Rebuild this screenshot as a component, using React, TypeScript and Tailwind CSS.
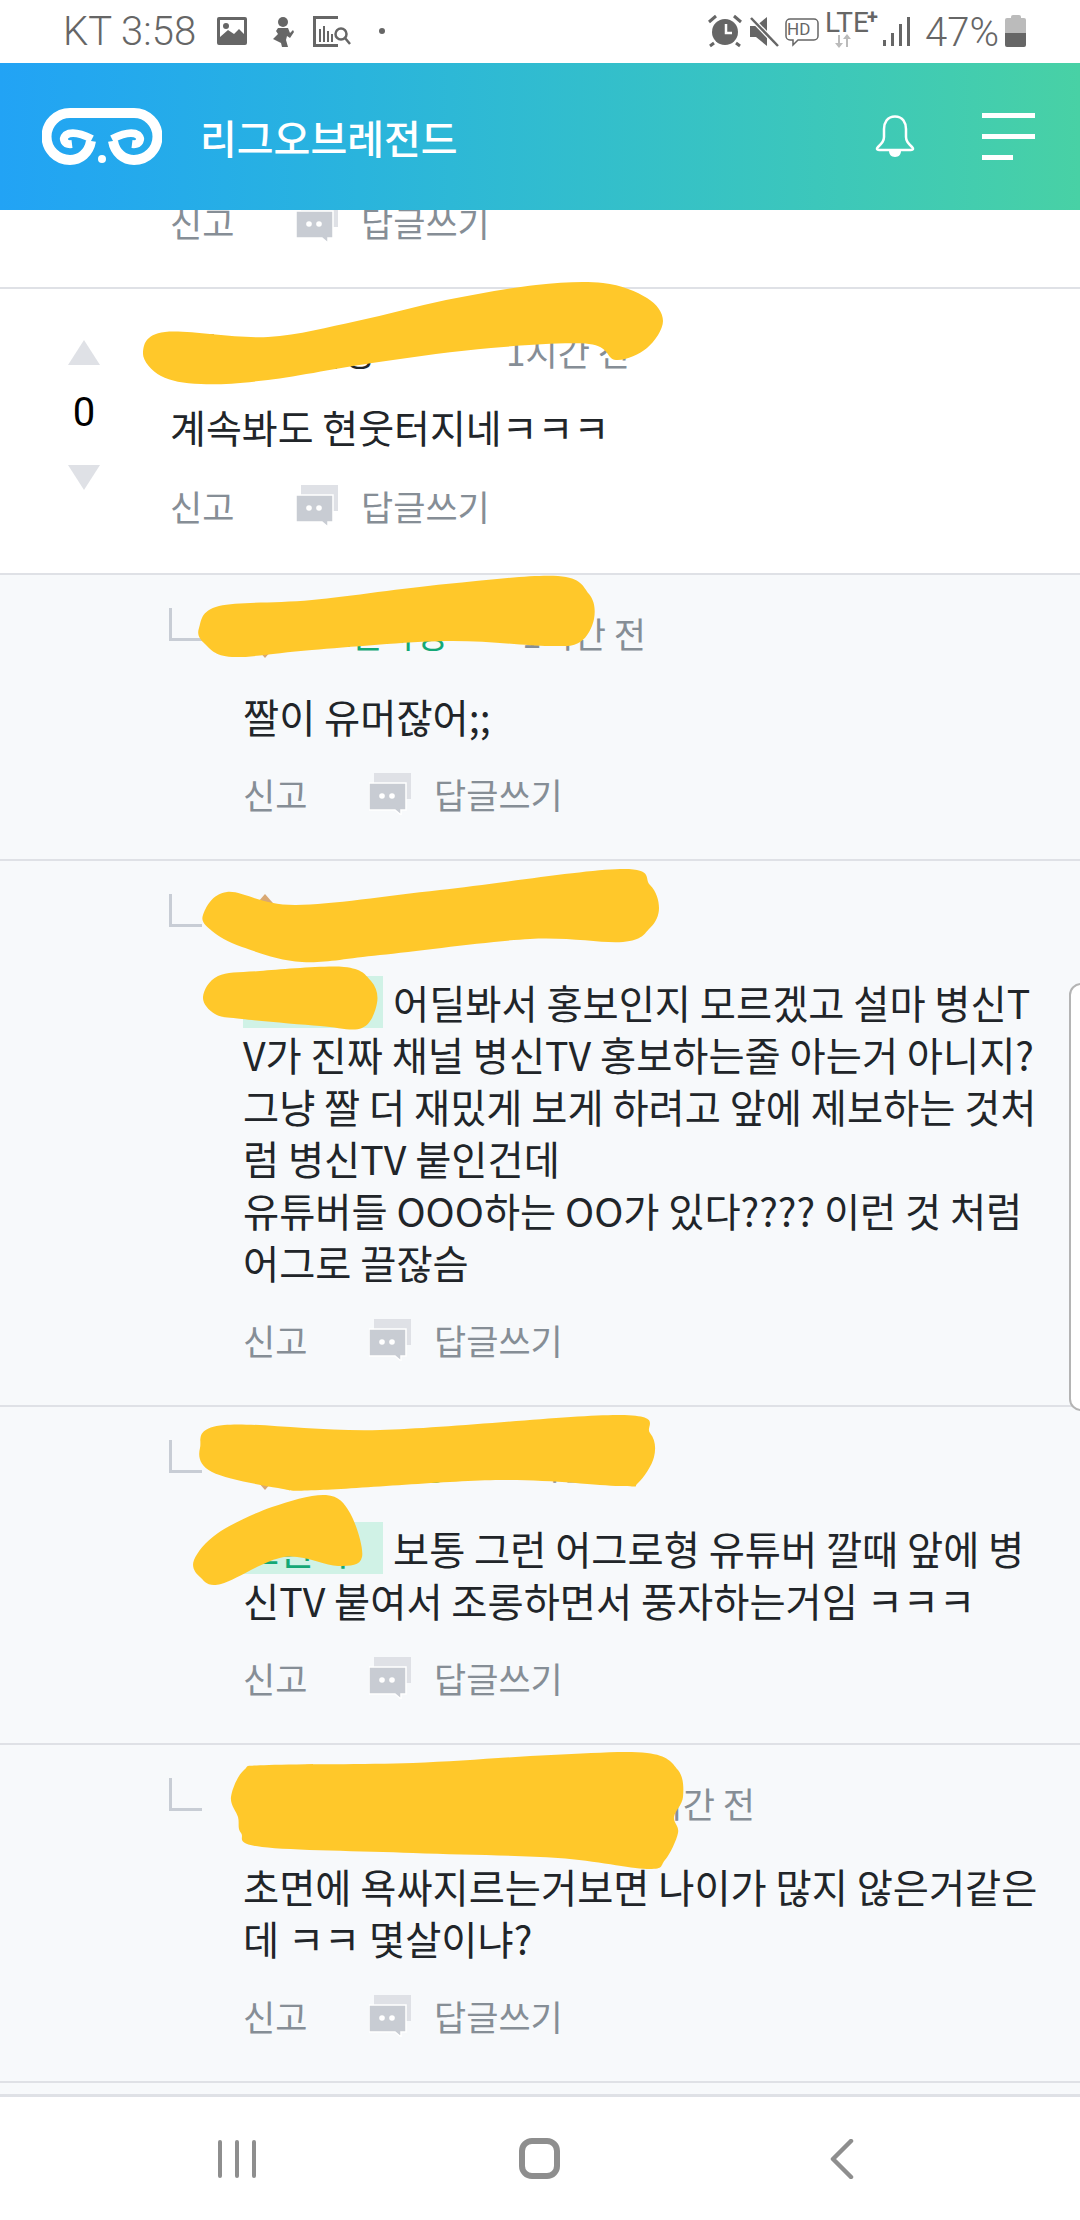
import type { ReactNode } from 'react';

const KR = 'font-["Noto_Sans_CJK_KR","Noto_Sans",sans-serif]';

type P = [number, number];

// smooth closed outline through the points of a marker stroke
function blob(pts: P[]) {
    const n = pts.length;
    let d = `M${pts[0][0]} ${pts[0][1]}`;
    for (let i = 0; i < n; i++) {
        const p0 = pts[(i - 1 + n) % n], p1 = pts[i], p2 = pts[(i + 1) % n], p3 = pts[(i + 2) % n];
        d += ` C${p1[0] + (p2[0] - p0[0]) / 6} ${p1[1] + (p2[1] - p0[1]) / 6} ${p2[0] - (p3[0] - p1[0]) / 6} ${p2[1] - (p3[1] - p1[1]) / 6} ${p2[0]} ${p2[1]}`;
    }
    return d + 'Z';
}

const scribbles: P[][] = [
    [[143, 353], [165, 332], [268, 337], [357, 321], [446, 300], [536, 285], [603, 283], [647, 298], [663, 321], [647, 348], [616, 360], [589, 344], [491, 348], [379, 362], [268, 380], [201, 384], [161, 376]],
    [[199, 628], [219, 606], [312, 600], [446, 584], [558, 576], [589, 594], [594, 619], [580, 642], [549, 646], [446, 641], [312, 650], [232, 657], [205, 644]],
    [[203, 915], [227, 892], [296, 905], [440, 890], [620, 869], [650, 885], [659, 908], [650, 928], [623, 942], [530, 939], [380, 955], [302, 962], [242, 947], [212, 931]],
    [[203, 997], [218, 976], [260, 971], [344, 967], [371, 981], [377, 1003], [362, 1028], [320, 1026], [242, 1019], [215, 1014]],
    [[200, 1448], [224, 1425], [380, 1430], [620, 1415], [650, 1433], [654, 1457], [638, 1483], [620, 1486], [500, 1480], [320, 1490], [278, 1488], [212, 1472]],
    [[194, 1560], [218, 1533], [272, 1507], [326, 1495], [350, 1513], [362, 1557], [338, 1566], [284, 1557], [221, 1584], [200, 1577]],
    [[231, 1797], [244, 1770], [269, 1765], [413, 1763], [551, 1755], [647, 1753], [678, 1770], [683, 1797], [674, 1817], [678, 1833], [665, 1860], [647, 1869], [558, 1858], [413, 1853], [262, 1847], [241, 1833], [238, 1817]],
];

function ReplyIcon() {
    return (
        <svg width="42" height="42" viewBox="0 0 42 42" className="shrink-0">
            <rect x="5" y="0" width="37" height="26" fill="#dfe1e6" />
            <path d="M0 10h37v27h-5v5l-6-5H0z" fill="#c8ccd3" stroke="#fff" strokeWidth="1.500" />
            <circle cx="13" cy="23" r="2.800" fill="#fff" />
            <circle cx="23" cy="23" r="2.800" fill="#fff" />
        </svg>
    );
}

function Actions() {
    return (
        <div className="flex h-[44px] items-center text-[35px] text-[#868e96]">
            <span className="w-[126px]">신고</span>
            <ReplyIcon />
            <span className="ml-[23px]">답글쓰기</span>
        </div>
    );
}

function Header({ name, time, nameWidth, main }: { name: string; time: string; nameWidth: string; main?: boolean }) {
    return (
        <div className="flex h-[50px] items-center text-[35px]">
            <svg width="44" height="50" viewBox="0 0 44 50" className="mr-[32px] shrink-0">
                <path d={main ? 'M0 8h44v22L22 50 0 30z' : 'M22 0 44 25 22 50 0 25z'} fill="#d9a873" />
            </svg>
            <span className={`${nameWidth} truncate ${main ? 'text-[#212529]' : 'text-[#14a876]'}`}>{name}</span>
            <span className="text-[#868e96]">{time}</span>
        </div>
    );
}

function Mention({ children }: { children: ReactNode }) {
    return <span className="mr-[10px] inline-block h-[52px] w-[140px] bg-[#d0f2e6] align-top text-[#14a876]">{children}</span>;
}

function Reply({ name, time, nameWidth, children }: { name: string; time: string; nameWidth: string; children: ReactNode }) {
    return (
        <div className="relative border-t-2 border-[#dfe1e6] bg-[#f7f9fb] pt-[33px] pr-[36px] pb-[43px] pl-[243px]">
            <div className="absolute top-[33px] left-[169px] h-[33px] w-[33px] border-b-[3px] border-l-[3px] border-[#c8cdd5]" />
            <Header name={name} time={time} nameWidth={nameWidth} />
            <div className="mt-[32px] text-[39.3px] leading-[52px] break-all text-[#212529]">{children}</div>
            <div className="mt-[30px]"><Actions /></div>
        </div>
    );
}

function StatusBar() {
    return (
        <div className="relative h-[63px] shrink-0 bg-white font-['Roboto',sans-serif] font-light text-[#666]">
            <span className="absolute top-[9px] left-[63px] text-[40px] leading-[46px]">KT 3:58</span>
            <svg width="1080" height="63" viewBox="0 0 1080 63" className="absolute top-0 left-0" fill="#666">
                {/* picture */}
                <path fillRule="evenodd" d="M219 17h26a2 2 0 0 1 2 2v24a2 2 0 0 1-2 2h-26a2 2 0 0 1-2-2V19a2 2 0 0 1 2-2zm1 3v17l8-7 6 4 5-5 5 5V20z" />
                <circle cx="226" cy="26" r="3" />
                {/* figure */}
                <circle cx="283" cy="22" r="5" />
                <path d="M278 28h10l2 5 3-3 1 2-4 6-3-2-1 4 2 7h-6l-1-4-8-4 5-5-2-3z" />
                {/* report search */}
                <path d="M313 16h25v3h-22v25h22v3h-25z" />
                <path d="M319 29h2v13h-2zM323 26h2v16h-2zM327 31h2v11h-2zM331 34h2v8h-2z" />
                <circle cx="341" cy="34" r="5.500" fill="none" stroke="#666" strokeWidth="2.500" />
                <path d="m345 38 5 6" stroke="#666" strokeWidth="2.500" />
                <circle cx="382" cy="31" r="3" />
                {/* alarm */}
                <circle cx="725" cy="32" r="13" />
                <path d="M726 24v9h6" fill="none" stroke="#fff" strokeWidth="2.500" />
                <path d="m709 22 7-6M741 22l-7-6M714 43l-4 3M736 43l4 3" stroke="#666" strokeWidth="3" />
                {/* mute */}
                <path d="M750 26h6l11-9v29l-11-9h-6z" />
                <path d="m750 17 28 29" stroke="#fff" strokeWidth="5" />
                <path d="m751 18 27 28" stroke="#666" strokeWidth="2.500" />
                {/* HD */}
                <path d="M790 19h24a4 4 0 0 1 4 4v13a4 4 0 0 1-4 4h-16l-5 5v-5h-3a4 4 0 0 1-4-4V23a4 4 0 0 1 4-4z" fill="none" stroke="#666" strokeWidth="1.500" />
                {/* lte arrows */}
                <path d="M838 35v8h-3l4 5 4-5h-3v-8zM846 47v-8h-3l4-5 4 5h-3v8z" fill="#bbb" />
                {/* signal */}
                <path d="M883 40h3v6h-3zM891 33h3v13h-3zM899 24h3v22h-3zM907 17h3v29h-3z" />
            </svg>
            <span className="absolute top-[19px] left-[787px] text-[17px] leading-[20px] font-normal">HD</span>
            <span className="absolute top-[10px] left-[825px] text-[28px] leading-[26px] font-normal">LTE</span>
            <span className="absolute top-[8px] left-[867px] text-[20px] leading-[18px] font-bold">+</span>
            <span className="absolute top-[10px] left-[925px] text-[40px] leading-[46px]">47%</span>
            <div className="absolute top-[15px] left-[1005px] flex h-[32px] w-[21px] flex-col">
                <div className="mx-auto h-[3px] w-[10px] rounded-t-[2px] bg-[#bbb]" />
                <div className="h-[15px] rounded-t-[2px] bg-[#bbb]" />
                <div className="h-[14px] rounded-b-[2px] bg-[#666]" />
            </div>
        </div>
    );
}

function TopBar() {
    return (
        <div className="flex h-[147px] shrink-0 items-center bg-gradient-to-r from-[#22a3f5] to-[#48d1a5] pr-[45px] pl-[42px] text-white">
            <svg width="120" height="57" viewBox="0 0 120 57" fill="none" stroke="#fff" strokeWidth="10">
                <path d="M60 5H28A23 23 0 0 0 28 52C38 52 47 45 49 33" />
                <path d="M60 5H92A23 23 0 0 1 92 52C82 52 73 45 71 33" />
                <path d="M50 31C40 26 30 23 24 27C20 31 22 37 30 36" strokeWidth="8" />
                <path d="M70 31C80 26 90 23 96 27C100 31 98 37 90 36" strokeWidth="8" />
                <circle cx="60" cy="51" r="4" fill="#fff" stroke="none" />
            </svg>
            <span className={`ml-[38px] text-[40px] font-medium ${KR}`}>리그오브레전드</span>
            <svg width="40" height="43" viewBox="0 0 40 43" fill="none" stroke="#fff" strokeWidth="2.500" className="mr-[67px] ml-auto">
                <path d="M20 1.500C12 1.500 9 8 9 14v8c0 4-2 6-6 10-2 2-1 3 1 3h32c2 0 3-1 1-3-4-4-6-6-6-10v-8c0-6-3-12.500-11-12.500z" />
                <path d="M14 36h12c0 3-2 6-6 6s-6-3-6-6z" fill="#fff" stroke="none" />
            </svg>
            <div className="flex flex-col gap-[16px]">
                <div className="h-[5px] w-[53px] bg-white" />
                <div className="h-[5px] w-[53px] bg-white" />
                <div className="h-[5px] w-[31px] bg-white" />
            </div>
        </div>
    );
}

export default function App() {
    return (
        <div className={`relative flex h-[2220px] w-[1080px] flex-col overflow-hidden bg-white text-[39px] ${KR}`}>
            <StatusBar />
            <TopBar />
            <div className="min-h-0 flex-1 overflow-hidden">
                <div className="h-[77px] overflow-hidden bg-white pl-[170px]">
                    <div className="-mt-[10px]"><Actions /></div>
                </div>

                <div className="relative flex border-t-2 border-[#dfe1e6] bg-white pt-[37px] pb-[45px]">
                    <div className="flex w-[170px] shrink-0 flex-col items-center pr-[2px]">
                        <svg width="32" height="25" viewBox="0 0 32 25" className="mt-[14px]"><path d="M16 0 32 25H0z" fill="#dfe1e6" /></svg>
                        <span className="mt-[27px] font-['Roboto',sans-serif] text-[40px] leading-[42px] text-black">0</span>
                        <svg width="32" height="25" viewBox="0 0 32 25" className="mt-[31px]"><path d="M16 25 32 0H0z" fill="#dfe1e6" /></svg>
                    </div>
                    <div>
                        <Header main name="소환사명" time="1시간 전" nameWidth="w-[260px]" />
                        <div className="mt-[24px] leading-[52px] text-[#212529]">계속봐도 현웃터지네ㅋㅋㅋ</div>
                        <div className="mt-[32px]"><Actions /></div>
                    </div>
                </div>

                <Reply name="소환사명" time="1시간 전" nameWidth="w-[203px]">짤이 유머잖어;;</Reply>
                <Reply name="소환사명" time="1시간 전" nameWidth="w-[190px]">
                    <Mention>소환사</Mention>어딜봐서 홍보인지 모르겠고 설마 병신TV가 진짜 채널 병신TV 홍보하는줄 아는거 아니지?
                    <br />그냥 짤 더 재밌게 보게 하려고 앞에 제보하는 것처럼 병신TV 붙인건데
                    <br />유튜버들 OOO하는 OO가 있다???? 이런 것 처럼 어그로 끌잖슴
                </Reply>
                <Reply name="소환사명" time="1시간 전" nameWidth="w-[190px]">
                    <Mention>소환사</Mention>보통 그런 어그로형 유튜버 깔때 앞에 병신TV 붙여서 조롱하면서 풍자하는거임 ㅋㅋㅋ
                </Reply>
                <Reply name="소환사명" time="1시간 전" nameWidth="w-[312px]">초면에 욕싸지르는거보면 나이가 많지 않은거같은데 ㅋㅋ 몇살이냐?</Reply>

                <div className="h-[13px] border-t-2 border-[#dfe1e6] bg-[#f7f9fb]" />
                <div className="h-[3px] bg-[#dfe1e6]" />
            </div>

            <div className="flex h-[123px] shrink-0 items-center bg-white">
                <div className="ml-[218px] flex h-[38px] gap-[13px]">
                    <div className="w-[4px] rounded-full bg-[#8e8e8e]" />
                    <div className="w-[4px] rounded-full bg-[#8e8e8e]" />
                    <div className="w-[4px] rounded-full bg-[#8e8e8e]" />
                </div>
                <div className="ml-[263px] h-[41px] w-[41px] rounded-[13px] border-[6px] border-[#8e8e8e]" />
                <svg width="24" height="40" viewBox="0 0 24 40" fill="none" stroke="#8e8e8e" strokeWidth="4.500" strokeLinecap="round" strokeLinejoin="round" className="ml-[270px]">
                    <path d="M21 2 3 20l18 18" />
                </svg>
            </div>

            {/* the phone's edge panel handle */}
            <div className="absolute top-[983px] left-[1069px] h-[428px] w-[20px] rounded-l-[12px] border-2 border-[#b4b4b4] bg-white" />

            {/* hand-drawn marker over the nicknames */}
            <svg width="1080" height="2220" viewBox="0 0 1080 2220" className="pointer-events-none absolute top-0 left-0">
                {scribbles.map((s, i) => <path key={i} d={blob(s)} fill="#ffc82a" />)}
            </svg>
        </div>
    );
}
